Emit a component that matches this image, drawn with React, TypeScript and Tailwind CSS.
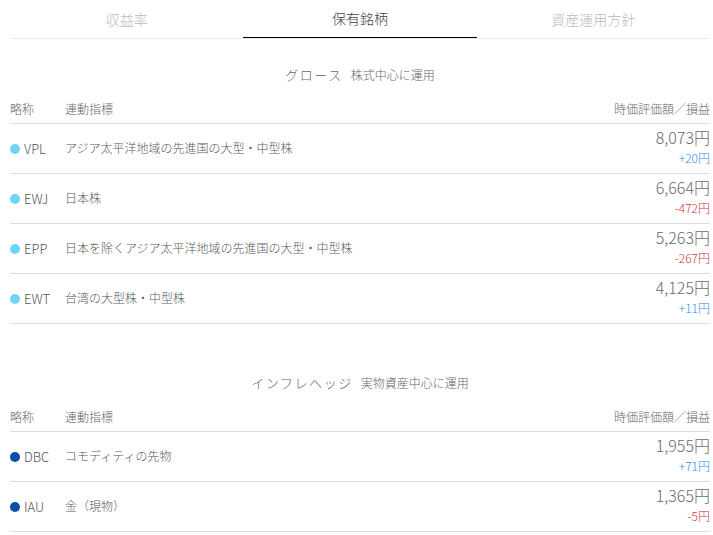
import React from "react";

type Holding = {
  ticker: string;
  name: string;
  value: string;
  diff: string;
};

type Section = {
  title: string;
  sub: string;
  dot: string;
  items: Holding[];
};

const sections: Section[] = [
  {
    title: "グロース",
    sub: "株式中心に運用",
    dot: "bg-[#6dd5f8]",
    items: [
      { ticker: "VPL", name: "アジア太平洋地域の先進国の大型・中型株", value: "8,073円", diff: "+20円" },
      { ticker: "EWJ", name: "日本株", value: "6,664円", diff: "-472円" },
      { ticker: "EPP", name: "日本を除くアジア太平洋地域の先進国の大型・中型株", value: "5,263円", diff: "-267円" },
      { ticker: "EWT", name: "台湾の大型株・中型株", value: "4,125円", diff: "+11円" },
    ],
  },
  {
    title: "インフレヘッジ",
    sub: "実物資産中心に運用",
    dot: "bg-[#0b4ea6]",
    items: [
      { ticker: "DBC", name: "コモディティの先物", value: "1,955円", diff: "+71円" },
      { ticker: "IAU", name: "金（現物）", value: "1,365円", diff: "-5円" },
    ],
  },
];

const tabs = ["収益率", "保有銘柄", "資産運用方針"];

const HoldingSection = ({ section }: { section: Section }) => (
  <section>
    <h2 className="flex justify-center items-baseline gap-2 h-[36px] pt-[7px] font-light text-[#666]">
      <span className="text-[13px] tracking-[0.12em]">{section.title}</span>
      <span className="text-[12px]">{section.sub}</span>
    </h2>
    <div className="flex items-center h-[30px] border-b border-[#ddd] text-[12px] text-[#666]">
      <span className="w-[55px]">略称</span>
      <span className="flex-1">連動指標</span>
      <span>時価評価額／損益</span>
    </div>
    {section.items.map((item) => (
      <div
        key={item.ticker}
        className="flex items-center h-[50px] border-b border-[#ddd] text-[12px] text-[#5a5a5a]"
      >
        <span className="w-[55px] flex items-center">
          <span className={`w-[10px] h-[10px] rounded-full mr-[4px] ${section.dot}`} />
          <span className="text-[13px] text-[#555]">{item.ticker}</span>
        </span>
        <span className="flex-1 -mt-[2px]">{item.name}</span>
        <div className="flex flex-col items-end mb-[4px]">
          <span className="text-[16px] leading-[22px] text-[#6a6a6a]">{item.value}</span>
          <span
            className={`text-[12px] leading-[20px] ${
              item.diff.startsWith("+") ? "text-[#2f8cf0]" : "text-[#d0313c]"
            }`}
          >
            {item.diff}
          </span>
        </div>
      </div>
    ))}
  </section>
);

const App = () => {
  return (
    <div className="bg-white w-[713px] h-[535px] overflow-hidden pl-[10px] pr-[3px] font-light font-['Noto_Sans_CJK_JP','Noto_Sans',sans-serif]">
      <nav className="flex border-b border-[#eee]">
        {tabs.map((tab, i) => (
          <div
            key={tab}
            className={`flex-1 h-[38px] flex items-center justify-center text-[14px] ${
              i === 1 ? "text-[#444] border-b-[1.5px] border-black -mb-px" : "text-[#bbb]"
            }`}
          >
            {tab}
          </div>
        ))}
      </nav>
      <div className="h-[19px]" />
      <HoldingSection section={sections[0]} />
      <div className="h-[42px]" />
      <HoldingSection section={sections[1]} />
    </div>
  );
};

export default App;
